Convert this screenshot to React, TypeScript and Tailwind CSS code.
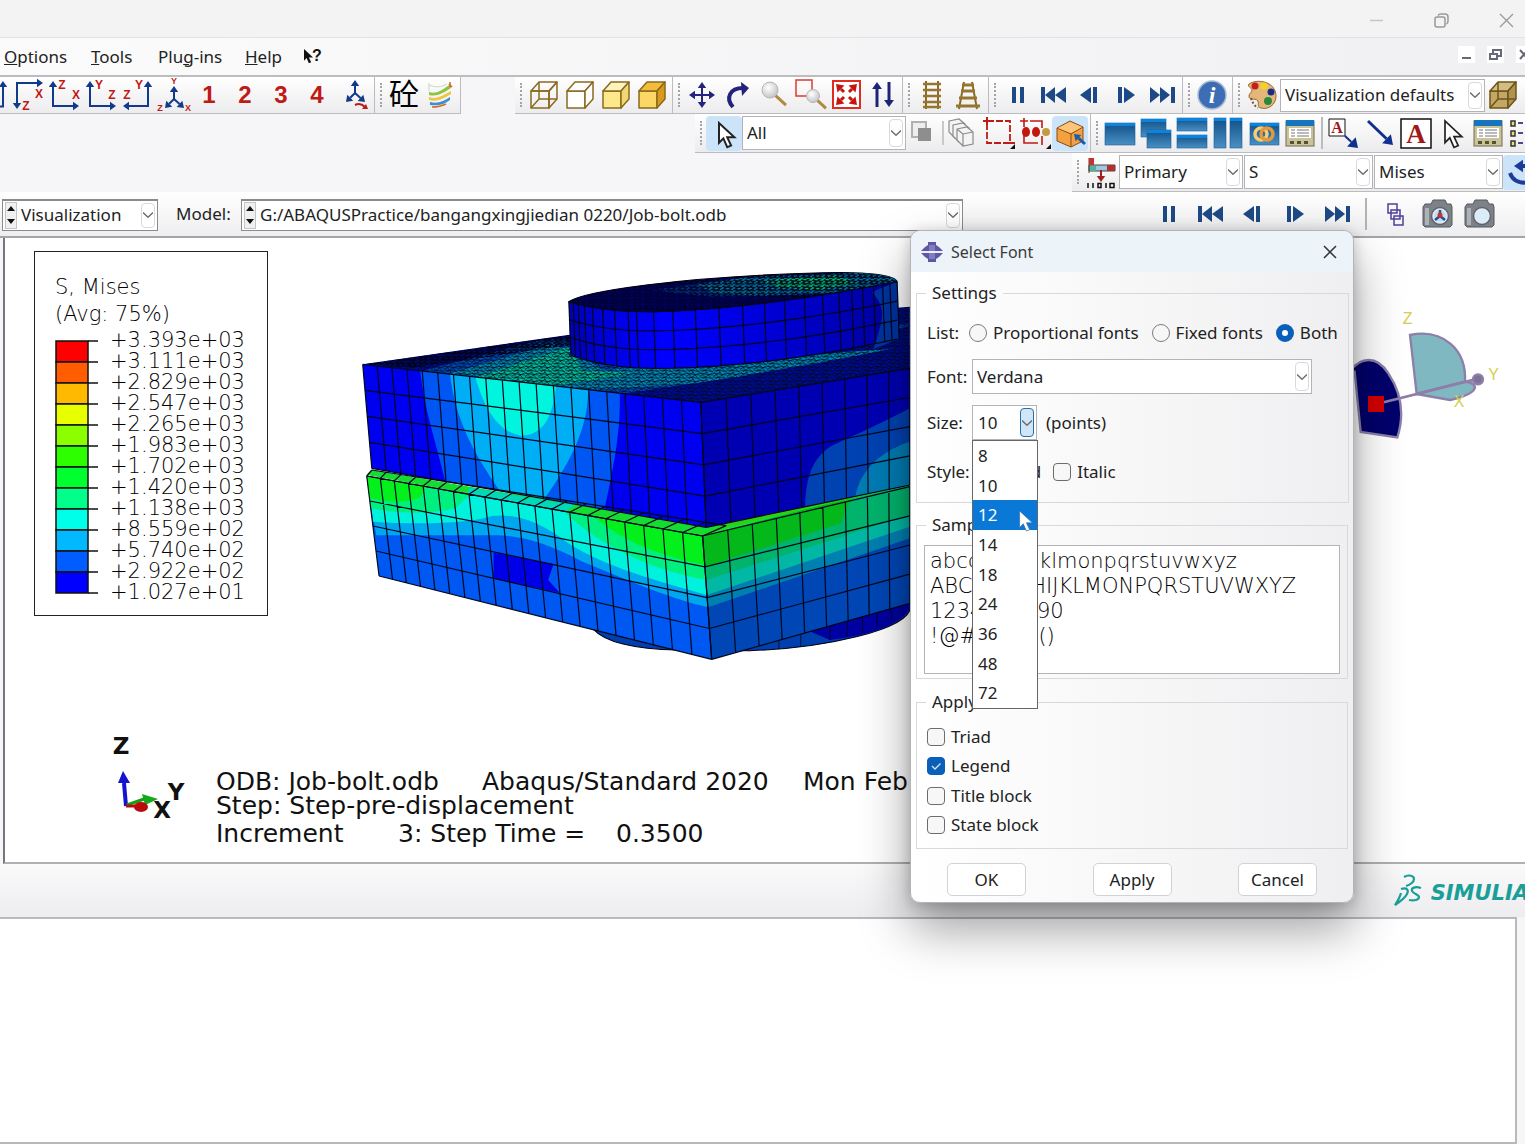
import type { ReactNode } from 'react'

const NAVY = '#123a8a'
const RED = '#c01a14'

type Pt = [number, number]

function Arrow({ a, b, color = NAVY, w = 2, head = 5 }: { a: Pt; b: Pt; color?: string; w?: number; head?: number }) {
  const len = Math.hypot(b[0] - a[0], b[1] - a[1])
  const ux = (b[0] - a[0]) / len
  const uy = (b[1] - a[1]) / len
  const bx = b[0] - ux * head
  const by = b[1] - uy * head
  const s = head * 0.7
  return (
    <g fill={color} stroke="none">
      <line x1={a[0]} y1={a[1]} x2={bx} y2={by} stroke={color} strokeWidth={w} />
      <polygon points={`${b[0]},${b[1]} ${bx - uy * s},${by + ux * s} ${bx + uy * s},${by - ux * s}`} />
    </g>
  )
}

function Letter({ x, y, c, size = 12 }: { x: number; y: number; c: string; size?: number }) {
  return (
    <text x={x} y={y + size * 0.36} fontSize={size} fontWeight="700" fill={RED} textAnchor="middle" fontFamily="Liberation Sans, sans-serif">
      {c}
    </text>
  )
}

function Tool({ label, children, active }: { label: string; children: ReactNode; active?: boolean }) {
  return (
    <button
      type="button"
      aria-label={label}
      className={`flex h-[35px] w-9 shrink-0 items-center justify-center ${active ? 'rounded-sm bg-[#cce4f9]' : ''}`}
    >
      <svg width="32" height="32" viewBox="0 0 32 32" fill="none" className="overflow-visible">
        {children}
      </svg>
    </button>
  )
}

function Grip() {
  return (
    <span className="flex w-[11px] shrink-0 justify-center">
      <span className="h-6 border-l-2 border-dotted border-[#a3a3a8]" />
    </span>
  )
}

function Group({ children, grip = true }: { children: ReactNode; grip?: boolean }) {
  return (
    <div className="flex h-full shrink-0 items-center border-r border-b border-[#bcbcc0] bg-linear-to-b from-white to-[#ececee] pr-0.5">
      {grip && <Grip />}
      {children}
    </div>
  )
}

function Chevron({ className = 'border-[#d9d9dc]' }: { className?: string }) {
  return (
    <span className={`pointer-events-none absolute top-[2px] right-[2px] bottom-[2px] flex w-[14px] items-center justify-center rounded-sm border ${className}`}>
      <svg width="10" height="6" viewBox="0 0 10 6" fill="none" stroke="#6b6b6b" strokeWidth="1.3">
        <path d="M0 .5 5 5.3 10 .5" />
      </svg>
    </span>
  )
}

function Combo({ label, value, className, id }: { label: string; value: string; className: string; id?: string }) {
  return (
    <span className={`relative block shrink-0 border border-[#b4b4b8] bg-white ${className}`}>
      <select id={id} aria-label={label} defaultValue={value} className="block h-full w-full appearance-none bg-transparent pr-4 pl-1 text-[#222] outline-none">
        <option>{value}</option>
      </select>
      <Chevron />
    </span>
  )
}

function Spinner() {
  return (
    <span className="flex h-[27px] w-3 shrink-0 flex-col items-center justify-center gap-2 border border-[#c4c4c4] bg-[#f0f0f0]">
      <svg width="8" height="18" viewBox="0 0 8 18" fill="#111">
        <path d="M4 0 8 5H0zM4 18 8 13H0z" />
      </svg>
    </span>
  )
}

const PLAY = '#1d4a86'

function PlaybackTools() {
  return (
    <>
      <Tool label="Pause">
        <path d="M10 8h4v16h-4zM18 8h4v16h-4z" fill={PLAY} />
      </Tool>
      <Tool label="First">
        <path d="M3 8h4v16H3zM17 8v16L7 16zM28 8v16L17 16z" fill={PLAY} />
      </Tool>
      <Tool label="Previous">
        <path d="M6 16 17 8v16zM19 8h4v16h-4z" fill={PLAY} />
      </Tool>
      <Tool label="Next">
        <path d="M8 8h4v16H8zM14 8v16l11-8z" fill={PLAY} />
      </Tool>
      <Tool label="Last">
        <path d="M4 8v16l10-8zM14 8v16l10-8zM25 8h4v16h-4z" fill={PLAY} />
      </Tool>
    </>
  )
}

function Cube({ front, top, side, stroke = '#8a6a1e', wire }: { front: string; top: string; side: string; stroke?: string; wire?: boolean }) {
  return (
    <g stroke={stroke} strokeWidth="1.500" strokeLinejoin="round">
      <path d="M3 12h18v17H3z" fill={front} />
      <path d="M3 12 11 3h18l-8 9z" fill={top} />
      <path d="M21 12 29 3v17l-8 9z" fill={side} />
      {wire && <path d="M11 3v17h18M11 20l-8 9" />}
    </g>
  )
}

function Pane({ x, y, w, h }: { x: number; y: number; w: number; h: number }) {
  return (
    <g>
      <rect x={x} y={y} width={w} height={h} fill="url(#pane)" stroke="#1d5c98" strokeWidth=".6" />
      <rect x={x} y={y} width={w} height="3" fill="#0b84e0" />
    </g>
  )
}

const CURSOR = 'M0 0v18l4-4 3.500 8 3.500-1.500-3.500-7.500H14z'

function Table() {
  return (
    <g>
      <rect x="2" y="4" width="28" height="25" fill="#c9c29a" stroke="#6f6a4e" />
      <rect x="2" y="3" width="28" height="6" fill="#1474bd" />
      <rect x="5" y="11" width="22" height="10" fill="#fff" />
      <path d="M7 13h4M7 16h4M7 19h4M13 13h12M13 16h12M13 19h12" stroke="#777" />
      <path d="M6 24h4v3H6zM13 24h4v3h-4zM20 24h4v3h-4z" fill="#55532f" />
    </g>
  )
}

function Lens({ x, y, r }: { x: number; y: number; r: number }) {
  return (
    <g>
      <path d={`M${x + r * 0.6} ${y + r * 0.6} ${x + r * 2} ${y + r * 1.9}`} stroke="#b08a3e" strokeWidth="3" />
      <circle cx={x} cy={y} r={r} fill="url(#lens)" stroke="#b5b5b5" />
    </g>
  )
}

function Camera({ color }: { color?: boolean }) {
  return (
    <g>
      <path d="M2 9 4 6h6l2-4h12l2 4h4l1 3v18l-2 2H4l-2-2z" fill="#7d8288" stroke="#55595e" />
      <path d="M4 10h4v17H4z" fill="#adb2b7" />
      <circle cx="19" cy="18" r="8.500" fill="#e3ebf2" stroke="#5e646b" strokeWidth="1.500" />
      <circle cx="19" cy="18" r="6" fill={color ? '#c6dcf0' : '#d8ecfb'} />
      {color && <path d="M19 18v-6M19 18l-5 4M19 18l5 4" stroke="#234f9c" strokeWidth="2.500" />}
      {color && <circle cx="19" cy="17" r="2.500" fill="#cc3424" />}
    </g>
  )
}

function ViewTools() {
  return (
    <Group grip={false}>
      <span className="flex w-[11px] shrink-0 items-center overflow-hidden">
        <svg width="11" height="32" viewBox="0 0 11 32">
          <Arrow a={[3, 28]} b={[3, 2]} head={6} />
          <path d="M0 27.500h4" stroke={NAVY} strokeWidth="2" />
        </svg>
      </span>
      <Tool label="Bottom view">
        <Arrow a={[3, 4]} b={[30, 4]} head={6} />
        <Arrow a={[4, 4]} b={[4, 30]} head={6} />
        <Letter x={26} y={15} c="X" />
        <Letter x={13} y={27} c="Z" />
      </Tool>
      <Tool label="Top view">
        <Arrow a={[4, 28]} b={[4, 2]} head={6} />
        <Arrow a={[3, 27]} b={[30, 27]} head={6} />
        <Letter x={13} y={6} c="Z" />
        <Letter x={27} y={16} c="X" />
      </Tool>
      <Tool label="Left view">
        <Arrow a={[5, 28]} b={[5, 2]} head={6} />
        <Arrow a={[4, 27]} b={[31, 27]} head={6} />
        <Letter x={14} y={6} c="Y" />
        <Letter x={27} y={16} c="Z" />
      </Tool>
      <Tool label="Right view">
        <Arrow a={[27, 28]} b={[27, 2]} head={6} />
        <Arrow a={[28, 27]} b={[2, 27]} head={6} />
        <Letter x={18} y={6} c="Y" />
        <Letter x={6} y={16} c="Z" />
      </Tool>
      <Tool label="Iso view">
        <Arrow a={[17, 20]} b={[17, 7]} head={6} />
        <Arrow a={[17, 20]} b={[8, 29]} head={6} />
        <Arrow a={[17, 20]} b={[27, 29]} head={6} />
        <Letter x={17} y={2} c="Y" size={9} />
        <Letter x={3} y={29} c="Z" size={9} />
        <Letter x={31} y={29} c="X" size={9} />
      </Tool>
      {['1', '2', '3', '4'].map((n) => (
        <button key={n} type="button" className="h-[35px] w-9 shrink-0 font-['Liberation_Sans',sans-serif] text-2xl font-bold text-[#c01a14]">
          {n}
        </button>
      ))}
      <Tool label="Specify view">
        <Arrow a={[18, 14]} b={[18, 1]} head={6} />
        <Arrow a={[18, 14]} b={[9, 23]} head={6} />
        <Arrow a={[18, 14]} b={[28, 23]} head={6} />
        <path d="M18 26c4-2 7-1 10 2" stroke={RED} strokeWidth="2" />
        <path d="m31 30-6 0 4-5z" fill={RED} />
      </Tool>
      <span className="ml-[3px] h-full border-l border-[#bcbcc0]" />
      <Grip />
      <button type="button" className="h-[35px] w-9 shrink-0 font-['Liberation_Sans','Noto_Sans_CJK_SC',sans-serif] text-[30px] leading-[30px] text-black">
        砼
      </button>
      <Tool label="Contour tools">
        <path d="M5 13c8 3 14-3 22-8v4c-8 5-14 9-22 7z" fill="#8cc63f" />
        <path d="M5 18c8 3 14-2 22-6v3c-8 5-14 8-22 6z" fill="#f0c541" />
        <path d="M6 23c8 2 14-1 20-5v3c-7 5-12 6-20 5z" fill="#3b8fd4" />
        <path d="M8 28c6 0 10-1 14-3M25 5l3 3M26 3v5" stroke="#d9682a" strokeWidth="1.500" />
        <path d="M5 6c8 3 12 2 18-1M5 4v8" stroke="#ccd6c0" />
      </Tool>
    </Group>
  )
}

function ToolbarTop() {
  return (
    <div className="flex h-[39px] overflow-hidden border-t-2 border-[#bdbdc1]">
      <ViewTools />
      <div className="ml-[54px] flex grow">
        <Group>
          <Tool label="Wireframe">
            <Cube front="none" top="none" side="none" wire />
          </Tool>
          <Tool label="Hidden line">
            <Cube front="#fff" top="#fff" side="#fff" />
          </Tool>
          <Tool label="Filled">
            <Cube front="#fbe98c" top="#fdf3bd" side="#efd873" />
          </Tool>
          <Tool label="Shaded">
            <Cube front="#fbd765" top="#f3bd3a" side="#d99a1c" />
          </Tool>
        </Group>
        <Group>
          <Tool label="Pan">
            {([[16, 3], [16, 29], [3, 16], [29, 16]] as Pt[]).map((p) => (
              <Arrow key={p.join()} a={[16, 16]} b={p} color="#23237d" head={6} />
            ))}
          </Tool>
          <Tool label="Rotate">
            <path d="M11 28C3 19 8 9 21 9" stroke="#23237d" strokeWidth="4" />
            <path d="m19 3 8 6-7 8z" fill="#23237d" />
          </Tool>
          <Tool label="Magnify">
            <Lens x={12} y={11} r={8} />
          </Tool>
          <Tool label="Box zoom">
            <path d="M2 1h16v16H2z" stroke="#dc3a34" strokeWidth="1.500" />
            <Lens x={19} y={17} r={6.5} />
          </Tool>
          <Tool label="Fit view">
            <path d="M3 2h27v27H3z" fill="#fff" stroke="#e02b22" strokeWidth="2" />
            {([[6, 5], [27, 5], [6, 26], [27, 26]] as Pt[]).map((p) => (
              <Arrow key={p.join()} a={[p[0] < 16 ? 14 : 19, p[1] < 16 ? 13 : 18]} b={p} color="#c4160f" w={3} head={7} />
            ))}
          </Tool>
          <Tool label="Cycle views">
            <Arrow a={[11, 28]} b={[11, 3]} color="#1c2478" w={3} head={7} />
            <Arrow a={[23, 3]} b={[23, 28]} color="#1c2478" w={3} head={7} />
          </Tool>
        </Group>
        <Group>
          <Tool label="Parallel">
            <path d="M10 2v28M22 2v28" stroke="#8a6a28" strokeWidth="2" />
            <path d="M7 5h18M7 11h18M7 17h18M7 23h18M7 28h18" stroke="#96762e" strokeWidth="2.500" />
          </Tool>
          <Tool label="Perspective">
            <path d="M12 3 7 30M20 3l5 27" stroke="#8a6a28" strokeWidth="2" />
            <path d="M10 6h12M9 12h14M7 19h18M4 27h24" stroke="#96762e" strokeWidth="3" />
          </Tool>
        </Group>
        <Group>
          <PlaybackTools />
        </Group>
        <Group>
          <Tool label="Query">
            <circle cx="16" cy="16" r="14" fill="#3c6db5" stroke="#a9bad4" strokeWidth="1.500" />
            <text x="16" y="24" fontSize="24" fontStyle="italic" fontWeight="700" textAnchor="middle" fill="#fff" fontFamily="Liberation Serif, serif">
              i
            </text>
          </Tool>
        </Group>
        <div className="flex grow items-center border-b border-[#bcbcc0] bg-linear-to-b from-white to-[#ececee]">
          <Grip />
          <Tool label="Color code">
            <path d="M3 5C12-1 30 3 30 17c0 9-8 14-15 12-5-1-1-6-4-8-2-2-8 1-8-4 0-3 3-3 3-6 0-2-5-3-3-6z" fill="#e2b777" stroke="#94683a" />
            <circle cx="9" cy="7" r="3.500" fill="#c61d1d" />
            <circle cx="18" cy="7" r="3.500" fill="#f1d320" />
            <circle cx="25" cy="13" r="3.500" fill="#1c2a86" />
            <circle cx="22" cy="22" r="4" fill="#258a3c" />
            <path d="M5 19c2 6 4 8 7 10" stroke="#7a4e2a" strokeWidth="2" strokeDasharray="2 2" />
          </Tool>
          <Combo label="Color mapping" value="Visualization defaults" className="h-[33px] w-[205px]" />
          <Tool label="Translucency">
            <Cube front="#c3a765" top="#d3bd85" side="#b09350" stroke="#6f5418" wire />
          </Tool>
        </div>
      </div>
    </div>
  )
}

function ToolbarSelection() {
  return (
    <div className="ml-[695px] flex h-[39px] overflow-hidden">
      <Group>
        <Tool label="Select" active>
          <path d={CURSOR} transform="translate(11 6) scale(1.1)" fill="#fff" stroke="#222" strokeWidth="1.800" />
        </Tool>
        <Combo label="Selection filter" value="All" className="h-[34px] w-[164px]" />
        <Tool label="Replace selected">
          <path d="M4 5h14v15H4z" stroke="#b0b0b0" strokeWidth="2" fill="#eee" />
          <path d="M10 11h13v13H10z" fill="#8e8e8e" />
        </Tool>
        <span className="h-6 border-l-2 border-[#c9c9cb]" />
        <Tool label="Display group">
          <g stroke="#8b8b8b" strokeWidth="1.200" fill="#f4f4f4">
            <path d="m3 4 10-2 6 5v12l-10 2-6-6z" />
            <path d="m7 8 10-2 6 5v12l-10 2-6-6z" />
            <path d="m11 12 10-2 6 5v12l-10 2-6-6zM11 12l6 5v12M17 17l10-2" />
          </g>
        </Tool>
        <Tool label="Drag rectangle">
          <path d="M5 4h23v22H5z" stroke="#c01a14" strokeWidth="1.800" strokeDasharray="7 2" />
          <path d="M1 4h8M5 0v8M24 26h9" stroke="#c01a14" strokeWidth="2" />
          <path d="M33 32v-5l-5 5z" fill="#111" />
        </Tool>
        <Tool label="Selection options">
          <path d="M2 4h8M6 1v9M6 12v14h14M12 4h12v7M24 19v9" stroke="#c01a14" strokeWidth="1.600" />
          <ellipse cx="8" cy="15" rx="4" ry="5" fill="#c2160f" />
          <ellipse cx="18" cy="15" rx="4" ry="5" fill="#c2160f" />
          <circle cx="28" cy="15" r="4" fill="#c59a45" />
          <path d="M33 32v-5l-5 5z" fill="#111" />
        </Tool>
        <Tool label="Select from exterior" active>
          <path d="m3 11 13-7 13 6v14l-12 6-14-6z" fill="#f2a040" stroke="#8a4b12" />
          <path d="m3 11 14 6 12-7M17 17v13" stroke="#8a4b12" />
          <path d="m4 11 12-6 12 5-11 6z" fill="#fbc67c" />
          <Arrow a={[31, 27]} b={[20, 17]} color="#1d5ca8" head={6} w={3} />
        </Tool>
      </Group>
      <div className="flex grow items-center border-b border-[#bcbcc0] bg-linear-to-b from-white to-[#ececee]">
        <Grip />
        <Tool label="New viewport">
          <Pane x={1} y={6} w={30} h={22} />
        </Tool>
        <Tool label="Cascade">
          <Pane x={1} y={2} w={25} h={18} />
          <Pane x={7} y={13} w={24} h={18} />
        </Tool>
        <Tool label="Tile horizontally">
          <Pane x={1} y={1} w={30} h={13} />
          <Pane x={1} y={18} w={30} h={13} />
        </Tool>
        <Tool label="Tile vertically">
          <Pane x={2} y={1} w={12} h={30} />
          <Pane x={18} y={1} w={12} h={30} />
        </Tool>
        <Tool label="Link viewports">
          <Pane x={2} y={6} w={29} h={22} />
          <g stroke="#f4cd74" strokeWidth="3.500">
            <circle cx="13" cy="17" r="6" />
            <circle cx="19" cy="17" r="6" stroke="#e39a3c" />
          </g>
        </Tool>
        <Tool label="Viewport annotations">
          <Table />
        </Tool>
        <span className="mx-[3px] h-8 border-l-2 border-[#bcbcc0]" />
        <Tool label="Text with arrow">
          <path d="M1 2h16v17H1z" fill="#fff" stroke="#111" />
          <text x="9" y="16" fontSize="16" fontWeight="700" textAnchor="middle" fill="#a01818" fontFamily="Liberation Serif, serif">
            A
          </text>
          <Arrow a={[17, 19]} b={[30, 31]} color="#10308e" head={9} />
        </Tool>
        <Tool label="Arrow annotation">
          <Arrow a={[4, 4]} b={[29, 28]} color="#10308e" w={3} head={9} />
        </Tool>
        <Tool label="Text annotation">
          <path d="M1 2h30v29H1z" fill="#fff" stroke="#111" strokeWidth="1.500" />
          <text x="16" y="26" fontSize="27" fontWeight="700" textAnchor="middle" fill="#a01818" fontFamily="Liberation Serif, serif">
            A
          </text>
        </Tool>
        <Tool label="Edit annotation">
          <path d={CURSOR} transform="translate(9 4) scale(1.2)" fill="#fff" stroke="#222" strokeWidth="1.400" />
        </Tool>
        <Tool label="Annotation manager">
          <Table />
        </Tool>
        <Tool label="Options list">
          <path d="M3 4h4v5H3zM3 14h4v5H3zM3 24h4v5H3z" stroke="#333" strokeWidth="1.500" fill="#e8df70" />
          <path d="M10 6h20M10 16h20M10 26h20" stroke="#4b4b8c" strokeWidth="2" strokeDasharray="5 2" />
        </Tool>
      </div>
    </div>
  )
}

function ToolbarField() {
  return (
    <div className="ml-[1072px] flex h-[39px] items-center overflow-hidden border-b border-[#bcbcc0] bg-linear-to-b from-white to-[#ececee]">
      <Grip />
      <Tool label="Field output">
        <path d="M4 2v15M4 9h26v6H4z" fill="#9fc8e0" stroke="#444" />
        <path d="M4 2h5v7H4z" fill="#c8322a" />
        <path d="M5 10h6v5H5z" fill="#4fb29d" />
        <path d="M22 9h8v6h-8z" fill="#b03030" />
        <Arrow a={[16, 14]} b={[16, 26]} color="#a31f1f" head={6} />
        <path d="M3 27v5M8 27v5M13 27.500v4h3v-4zM21 27v5M25 27.500h4v4h-4z" stroke="#111" strokeWidth="1.500" />
      </Tool>
      <Combo label="Variable type" value="Primary" className="h-[34px] w-[124px]" />
      <Combo label="Output variable" value="S" className="ml-[1px] h-[34px] w-[129px]" />
      <Combo label="Invariant" value="Mises" className="ml-[1px] h-[34px] w-[129px]" />
      <Tool label="Sync" active>
        <path d="M5 17c3 9 12 11 22 9" stroke="#1e3c96" strokeWidth="4" />
        <Arrow a={[26, 10]} b={[9, 10]} color="#1e3c96" w={4} head={9} />
      </Tool>
    </div>
  )
}

function ContextBar() {
  return (
    <div className="flex h-[46px] items-center border-b-2 border-[#a5a5a9] bg-linear-to-b from-white to-[#eeeef0]">
      <div className="relative mt-[1px] ml-[2px] flex h-8 w-[156px] items-center border border-t-2 border-[#8b8b8f] bg-white pl-[2px]">
        <Spinner />
        <select aria-label="Module" className="h-full grow appearance-none bg-transparent pl-1 outline-none">
          <option>Visualization</option>
        </select>
        <Chevron />
      </div>
      <label htmlFor="model" className="ml-[18px] w-[65px]">
        Model:
      </label>
      <div className="relative mt-[1px] flex h-8 w-[722px] items-center border border-t-2 border-[#8b8b8f] bg-white pl-[2px]">
        <Spinner />
        <select id="model" className="h-full grow appearance-none bg-transparent pl-1 outline-none">
          <option>G:/ABAQUSPractice/bangangxingjiedian 0220/Job-bolt.odb</option>
        </select>
        <Chevron />
      </div>
      <div className="ml-[188px] flex gap-[6px]">
        <PlaybackTools />
      </div>
      <span className="ml-[10px] h-8 border-l-2 border-[#b3b3b7]" />
      <div className="ml-[10px] flex items-center gap-[6px]">
        <Tool label="Viewports">
          <g stroke="#4d3f9a" strokeWidth="1.500">
            <path d="M9 6h9v9H9zM12 12h9v9h-9zM15 18h9v9h-9z" />
          </g>
        </Tool>
        <Tool label="Snapshot with axes">
          <Camera color />
        </Tool>
        <Tool label="Snapshot">
          <Camera />
        </Tool>
      </div>
    </div>
  )
}

const LEVELS = [
  ['+3.393e+03', '#ff0000'],
  ['+3.111e+03', '#ff5d00'],
  ['+2.829e+03', '#ffb900'],
  ['+2.547e+03', '#e8ff00'],
  ['+2.265e+03', '#8bff00'],
  ['+1.983e+03', '#2eff00'],
  ['+1.702e+03', '#00ff2e'],
  ['+1.420e+03', '#00ff8b'],
  ['+1.138e+03', '#00ffe8'],
  ['+8.559e+02', '#00b9ff'],
  ['+5.740e+02', '#005dff'],
  ['+2.922e+02', '#0000ff'],
  ['+1.027e+01', ''],
]

function Legend() {
  return (
    <div className="absolute top-[13px] left-[29px] w-[234px] border border-[#222] bg-white pt-[22px] pb-[9px] pl-5 font-['DejaVu_Sans',sans-serif] text-[21px] font-extralight text-black">
      <p className="leading-[27px]">S, Mises</p>
      <p className="leading-[27px]">(Avg: 75%)</p>
      <div className="mt-[2px] flex">
        <svg width="44" height="276" viewBox="0 0 44 276" className="shrink-0">
          {LEVELS.map(([label, color], i) => (
            <g key={label}>
              {color && <rect x="1" y={11 + i * 21} width="32" height="21" fill={color} stroke="#111" strokeWidth="1.500" />}
              <path d={`M33 ${11 + i * 21}h10`} stroke="#111" strokeWidth="1.500" />
            </g>
          ))}
        </svg>
        <ul className="ml-[11px]">
          {LEVELS.map(([label]) => (
            <li key={label} className="leading-[21px]">
              {label}
            </li>
          ))}
        </ul>
      </div>
    </div>
  )
}

// straight grid over a quad; k > 0 makes the columns grow from left to right
function grid(tl: Pt, tr: Pt, br: Pt, bl: Pt, cols: number, rows: number, k = 0) {
  const mix = (p: Pt, q: Pt, t: number) => `${(p[0] + (q[0] - p[0]) * t).toFixed(1)} ${(p[1] + (q[1] - p[1]) * t).toFixed(1)}`
  let d = ''
  for (let i = 0; i <= cols; i++) {
    const u = i / cols
    const t = u * (1 - k) + u * u * k
    d += `M${mix(tl, tr, t)}L${mix(bl, br, t)}`
  }
  for (let j = 0; j <= rows; j++) {
    d += `M${mix(tl, bl, j / rows)}L${mix(tr, br, j / rows)}`
  }
  return d
}

const RIM_X = [602, 614, 628, 645, 667, 695, 728, 765, 788, 835, 888, 950, 1015, 1080, 1140, 1195, 1250, 1300, 1345, 1380, 1410, 1440, 1465, 1485, 1505]
const rimTop = (x: number) => (x < 830 ? 155 - 30 * ((830 - x) / 228) ** 2.4 : 155 - 90 * ((x - 830) / 675) ** 1.6)
const rimBottom = (x: number) => (x < 850 ? 325 - 42 * ((850 - x) / 248) ** 2.4 : 325 - 88 * ((x - 850) / 655) ** 1.8)
const rimLine = (f: number) => RIM_X.map((x, i) => `${i ? 'L' : 'M'}${x} ${(rimTop(x) + (rimBottom(x) - rimTop(x)) * f).toFixed(1)}`).join('')

const SLAB_TOP = 'M35 313 600 225 1540 140V325L965 427z'
const CAP_TOP = `M602 125C640 95 900 50 1300 38C1440 34 1500 48 1505 65${[...RIM_X].reverse().map((x) => `L${x} ${rimTop(x).toFixed(1)}`).join('')}z`

function Model() {
  return (
    <svg className="absolute top-[22px] left-[345px]" width="570" height="410" viewBox="0 0 1568 1230" preserveAspectRatio="none" fill="none">
      <defs>
        <pattern id="dense" width="37" height="21" patternUnits="userSpaceOnUse">
          <path d="M0 4 37 9M0 15l37 4M2 0l17 21M18 0l15 21M0 13 20 0M6 21 37 2" stroke="#000814" strokeWidth="2" />
        </pattern>
        <pattern id="denser" width="31" height="19" patternUnits="userSpaceOnUse">
          <path d="M0 4l31 3M0 13l31 3M3 0l12 19M17 0l11 19M0 14 24 0M6 19l25-13" stroke="#000014" strokeWidth="3" />
        </pattern>
        <clipPath id="slabTop">
          <path d={SLAB_TOP} />
        </clipPath>
        <clipPath id="capTop">
          <path d={CAP_TOP} />
        </clipPath>
        <linearGradient id="capSide" x1="602" x2="1505" y1="0" y2="0" gradientUnits="userSpaceOnUse">
          <stop offset="0" stopColor="#0000b4" />
          <stop offset=".15" stopColor="#0000e6" />
          <stop offset=".3" stopColor="#0000ff" />
          <stop offset=".6" stopColor="#0000d8" />
          <stop offset="1" stopColor="#00009c" />
        </linearGradient>
      </defs>

      {/* nut below the plates */}
      <path d="M670 1108C700 1145 780 1168 900 1170L1100 1172C1300 1165 1540 1110 1542 1040L1000 1000z" fill="#003fae" stroke="#001" strokeWidth="3" />
      <path d="M1262 1112 1542 1030C1542 1080 1450 1125 1320 1140z" fill="#0000a0" />
      <path d="M1320 1098v42M1368 1085v44M1410 1072v46M1450 1060v42M1490 1050v32M1180 1138v30M1240 1120v38" stroke="#000" strokeWidth="2" />

      {/* lower plate */}
      <path d="M46 645 60 630 980 800 1540 672V760L970 830z" fill="#14dc30" />
      <path d="M330 683 620 735 590 757 320 703z" fill="#00d8b8" />
      <path d="M46 648 970 828 995 1198 80 948z" fill="#0058f2" />
      <path d="M46 648 970 828 985 1042C860 1010 740 948 640 905C540 850 480 828 400 826L72 826z" fill="#00a6ee" />
      <path d="M46 648 970 828 982 1005C850 965 700 920 600 850C520 780 450 760 390 768C330 790 200 795 64 785z" fill="#00f2dc" />
      <path d="M46 648 330 703 290 745C220 765 120 760 58 745zM590 757 970 828 980 960C830 930 690 860 590 757z" fill="#00f080" />
      <path d="M46 648 210 680 190 715C150 732 100 725 54 715zM670 770 970 828 976 915C860 890 760 850 670 770z" fill="#04f01c" />
      <path d="M395 878 560 912 545 960 577 998 395 956z" fill="#0000e8" />
      <path d="M970 828 1540 672V1030L995 1198z" fill="#0046b4" />
      <path d="M970 828 1540 672V835L985 1042z" fill="#0080b0" />
      <path d="M970 828 1540 672V800L982 1005z" fill="#00b8a4" />
      <path d="M970 828 1540 672V765L980 960z" fill="#00b46c" />
      <path d="M970 828 1380 712 1350 790 976 920z" fill="#04b81c" />
      <path d="M970 828 1035 797 1540 672" stroke="#30d010" strokeWidth="8" />

      {/* upper plate */}
      <path d={SLAB_TOP} fill="#000a9c" />
      <g clipPath="url(#slabTop)">
        <path d="M190 335 520 240 1560 190 1100 345 750 402z" fill="#0048b8" />
        <path d="M270 342 560 250 700 330 1440 270 1540 262 960 370 650 390z" fill="#0086b4" />
        <path d="M345 352 600 260 640 330 780 340 565 378z" fill="#00b89c" />
        <path d="M750 402 1200 330 1540 255v80L965 430z" fill="#000a9c" />
        <path d={SLAB_TOP} fill="url(#dense)" />
        <path d="M35 313 600 225 640 250 180 322z" fill="url(#denser)" />
      </g>
      <path d="M35 313 965 427 980 802 60 625z" fill="#0000f0" />
      <path d="M193 332 742 400C745 500 730 600 700 748L262 664C235 540 205 450 193 332z" fill="#0056f2" />
      <path d="M275 343 655 389C655 500 610 600 535 716L412 693C340 580 290 480 275 343z" fill="#00aef6" />
      <path d="M345 351 567 378C560 440 545 527 470 527C400 515 365 430 345 351z" fill="#00f4de" />
      <path d="M965 427 1540 325V675L980 802z" fill="#0000b2" />
      <path d="M1252 740C1255 650 1270 600 1320 560C1400 520 1480 480 1540 445V675z" fill="#0042b2" />
      <path d="M1390 708C1400 650 1440 580 1540 545V675z" fill="#007cb4" />

      <g stroke="#00061c" strokeWidth="1.200">
        <path vectorEffect="non-scaling-stroke" d={grid([35, 313], [965, 427], [980, 802], [60, 625], 20, 4, 0.15)} />
        <path vectorEffect="non-scaling-stroke" d={grid([965, 427], [1540, 325], [1540, 675], [980, 802], 9, 4, -0.1)} />
        <path vectorEffect="non-scaling-stroke" d={grid([46, 648], [970, 828], [995, 1198], [80, 948], 20, 4, 0.2)} />
        <path vectorEffect="non-scaling-stroke" d={grid([970, 828], [1540, 680], [1540, 1030], [995, 1198], 9, 4, -0.1)} />
        <path vectorEffect="non-scaling-stroke" d={grid([60, 630], [1035, 797], [970, 828], [46, 648], 20, 1, 0.2)} />
      </g>

      {/* bolt head */}
      <path d={`${rimLine(0)}L1510 238${[...RIM_X].reverse().map((x) => `L${x + 4} ${rimBottom(x).toFixed(1)}`).join('')}z`} fill="url(#capSide)" />
      <path d="M1436 96 1505 65 1510 236 1440 268C1450 230 1462 200 1464 160C1460 120 1445 110 1436 96z" fill="#0034a0" />
      <path d={CAP_TOP} fill="#000678" stroke="#000" strokeWidth="3" />
      <g clipPath="url(#capTop)">
        <path d="M830 90 1100 50 1505 35V80L1380 98 1000 112z" fill="#0078a8" />
        <path d="M1130 62 1340 45 1400 70 1290 90 1180 82z" fill="#00bc78" />
        <path d={CAP_TOP} fill="url(#denser)" />
        <path d="M600 150 640 90 950 70 1000 100 1250 115 800 160z" fill="#00004a" fillOpacity=".55" />
      </g>
      <g stroke="#00061c" strokeWidth="1.200">
        <path vectorEffect="non-scaling-stroke" d={RIM_X.map((x) => `M${x} ${rimTop(x).toFixed(1)}L${x + 6} ${rimBottom(x).toFixed(1)}`).join('')} />
        <path vectorEffect="non-scaling-stroke" d={rimLine(0) + rimLine(0.34) + rimLine(0.67) + rimLine(1)} />
      </g>
    </svg>
  )
}

function Compass() {
  return (
    <svg className="absolute top-[62px] right-0" width="175" height="150" viewBox="0 0 525 450" fill="none" stroke="#8d7fa8" strokeWidth="7">
      <path d="M0 215C30 170 80 165 115 220C155 280 165 340 142 412L32 396 14 215z" fill="#00006c" />
      <path d="M180 105C280 85 350 150 345 245L200 282z" fill="#80b8c2" />
      <path d="M200 282 345 245C390 250 390 280 300 300z" fill="#80b8c2" />
      <path d="M80 312 385 236" strokeWidth="8" />
      <circle cx="384" cy="238" r="15" fill="#7d7199" />
      <path d="M54 288h48v48H54z" fill="#d40000" stroke="none" />
      <g fill="#d8cc50" stroke="none" fontSize="48" textAnchor="middle" fontFamily="Liberation Sans, sans-serif">
        <text x="173" y="72">Z</text>
        <text x="431" y="241">Y</text>
        <text x="327" y="320">X</text>
      </g>
    </svg>
  )
}

function Triad() {
  return (
    <svg className="absolute top-[491px] left-[95px]" width="100" height="96" viewBox="0 0 100 96" fill="none">
      <path d="M26 77 24 54" stroke="#1414d0" strokeWidth="4" />
      <path d="M23 42 30 54H18z" fill="#1414d0" />
      <path d="M27 76 44 70" stroke="#14a014" strokeWidth="3" />
      <path d="M42 65 58 70 45 76z" fill="#14a81c" />
      <ellipse cx="41" cy="78" rx="7" ry="5" fill="#b80c0c" />
      <path d="M26 77h12" stroke="#b80c0c" strokeWidth="3" />
      <g fill="#111" fontSize="23" fontWeight="700" textAnchor="middle" fontFamily="DejaVu Sans, sans-serif">
        <text x="21" y="25">Z</text>
        <text x="76" y="71">Y</text>
        <text x="62" y="89">X</text>
      </g>
    </svg>
  )
}

function Viewport() {
  return (
    <main className="relative ml-[3px] h-[626px] overflow-hidden border-b-2 border-l-2 border-[#b0b0b4] border-l-[#77777b] bg-white">
      <Legend />
      <Model />
      <Compass />
      <Triad />
      <div className="absolute top-[532px] left-[211px] font-['DejaVu_Sans',sans-serif] text-[25px] leading-[24px] whitespace-nowrap text-[#111]">
        <p className="flex">
          <span className="w-[266px]">ODB: Job-bolt.odb</span>
          <span className="w-[321px]">Abaqus/Standard 2020</span>
          <span>Mon Feb</span>
        </p>
        <p>Step: Step-pre-displacement</p>
        <p className="mt-1 flex">
          <span className="w-[182px]">Increment</span>
          <span className="w-[218px]">3: Step Time =</span>
          <span>0.3500</span>
        </p>
      </div>
    </main>
  )
}

const SIZES = ['8', '10', '12', '14', '18', '24', '36', '48', '72']

function Radio({ label, checked }: { label: string; checked?: boolean }) {
  return (
    <label className="flex items-center gap-[6px] whitespace-nowrap">
      <input
        type="radio"
        name="list"
        defaultChecked={checked}
        className="h-[18px] w-[18px] appearance-none rounded-full border border-[#7c7c7c] bg-[#f7f7f7] checked:border-[6px] checked:border-[#0a5fb8] checked:bg-white"
      />
      {label}
    </label>
  )
}

function Check({ label, checked }: { label: string; checked?: boolean }) {
  return (
    <label className="flex items-center gap-[6px]">
      <span className="relative flex h-[18px] w-[18px]">
        <input
          type="checkbox"
          defaultChecked={checked}
          className="peer h-[18px] w-[18px] appearance-none rounded-[4px] border border-[#6c6c6c] bg-[#f7f7f7] checked:border-[#0a5fb8] checked:bg-[#0a5fb8]"
        />
        <svg className="pointer-events-none absolute inset-0 hidden peer-checked:block" width="18" height="18" viewBox="0 0 18 18" fill="none" stroke="#d6e8f8" strokeWidth="1.300">
          <path d="m5 9 3 3 5.500-5.500" />
        </svg>
      </span>
      {label}
    </label>
  )
}

function SelectFontDialog() {
  return (
    <div
      role="dialog"
      aria-labelledby="dialog-title"
      className="absolute top-[230px] left-[910px] w-[444px] rounded-[10px] border border-[#b2b4b8] bg-linear-to-r from-white to-[#efeff1] text-[#222] shadow-[0_26px_50px_rgba(0,0,0,0.38),0_2px_14px_rgba(0,0,0,0.2)]"
    >
      <div className="flex h-[41px] items-center rounded-t-[10px] bg-[#edf4f9] pr-[14px] pl-[10px]">
        <svg width="22" height="22" viewBox="0 0 22 22" fill="#5c58a6">
          <path d="M7 1h8v3l3 2 4 4H0l4-4 3-2zM0 12h22l-4 4-3 2v3H7v-3l-3-2z" />
          <path d="M8 4h6v14H8z" fill="#9a97cc" fillOpacity=".6" />
          <path d="M0 10h22v2H0z" fill="#eef" />
        </svg>
        <h2 id="dialog-title" className="ml-2 grow text-base text-[#3a3a3a]">
          Select Font
        </h2>
        <button type="button" aria-label="Close">
          <svg width="18" height="18" viewBox="0 0 18 18" stroke="#333" strokeWidth="1.500">
            <path d="m3 3 12 12M15 3 3 15" />
          </svg>
        </button>
      </div>

      <form className="px-[5px] pb-[6px]" onSubmit={(e) => e.preventDefault()}>
        <fieldset className="mt-[8px] h-[223px] border border-[#d9d9dc] px-[10px]">
          <legend className="-ml-[1px] px-[6px] leading-[26px]">Settings</legend>
          <div className="mt-[14px] flex h-[26px] items-center">
            <span className="w-[42px]">List:</span>
            <div className="flex gap-[13px]">
              <Radio label="Proportional fonts" />
              <Radio label="Fixed fonts" />
              <Radio label="Both" checked />
            </div>
          </div>
          <div className="mt-[13px] flex items-center">
            <label htmlFor="font" className="w-[45px]">
              Font:
            </label>
            <Combo id="font" label="Font" value="Verdana" className="h-[35px] w-[340px]" />
          </div>
          <div className="mt-[11px] flex items-center">
            <label htmlFor="size" className="w-[45px]">
              Size:
            </label>
            <div className="relative h-[35px] w-[65px] border border-[#b4b4b8] bg-white">
              <input id="size" defaultValue="10" className="h-full w-[45px] bg-transparent pl-[5px] outline-none" />
              <Chevron className="border-[#2c6da4] bg-[#cfe5f8]" />
              <ul role="listbox" aria-label="Size" className="absolute top-[34px] -left-[1px] z-10 flex h-[269px] w-[66px] flex-col border border-[#666] bg-white">
                {SIZES.map((s) => (
                  <li
                    key={s}
                    role="option"
                    aria-selected={s === '12'}
                    className={`flex flex-1 items-center pl-[5px] ${s === '12' ? 'bg-[#0a78d6] text-white' : ''}`}
                  >
                    {s}
                  </li>
                ))}
              </ul>
              <svg className="absolute top-[104px] left-[45px] z-20" width="16" height="22" viewBox="0 0 16 24">
                <path d={CURSOR} transform="translate(1 1)" fill="#fff" stroke="#3c6ea0" strokeWidth=".8" />
              </svg>
            </div>
            <span className="ml-[9px]">(points)</span>
          </div>
          <div className="mt-[19px] flex h-[26px] items-center">
            <span className="w-[54px]">Style:</span>
            <Check label="Bold" />
            <span className="w-[12px]" />
            <Check label="Italic" />
          </div>
        </fieldset>

        <fieldset className="mt-[9px] h-[167px] border border-[#d9d9dc] px-[7px]">
          <legend className="ml-[2px] px-[6px] leading-[26px]">Sample</legend>
          <div className="mt-[7px] h-[129px] border border-[#b4b4b8] bg-white px-[5px] pt-[3px] font-['DejaVu_Sans',sans-serif] text-[21px] leading-[25px] font-extralight whitespace-nowrap text-black">
            <p>abcdefghijklmonpqrstuvwxyz</p>
            <p>ABCDEFGHIJKLMONPQRSTUVWXYZ</p>
            <p>1234567890</p>
            <p>!@#$%^*()</p>
          </div>
        </fieldset>

        <fieldset className="mt-[10px] h-[160px] border border-[#d9d9dc] px-[10px]">
          <legend className="-ml-[1px] px-[6px] leading-[26px]">Apply To</legend>
          <div className="mt-[7px] grid h-[118px] grid-rows-4">
            <Check label="Triad" />
            <Check label="Legend" checked />
            <Check label="Title block" />
            <Check label="State block" />
          </div>
        </fieldset>

        <div className="mt-[14px] flex justify-between px-[31px]">
          {['OK', 'Apply', 'Cancel'].map((name) => (
            <button key={name} type="button" className="h-[33px] w-[79px] rounded-[5px] border border-[#d2d2d6] bg-white">
              {name}
            </button>
          ))}
        </div>
      </form>
    </div>
  )
}

export default function App() {
  return (
    <div className="relative flex min-h-screen w-full flex-col overflow-hidden bg-[#f6f5f8] font-['Noto_Sans',sans-serif] text-[17px] leading-6 text-[#222]">
      <svg width="0" height="0" className="absolute">
        <defs>
          <linearGradient id="pane" x1="0" y1="0" x2="0" y2="1">
            <stop offset="0" stopColor="#0f4f86" />
            <stop offset="1" stopColor="#4a90c4" />
          </linearGradient>
          <radialGradient id="lens" cx=".4" cy=".35" r=".7">
            <stop offset="0" stopColor="#fff" />
            <stop offset="1" stopColor="#bfc1c4" />
          </radialGradient>
        </defs>
      </svg>

      <header className="flex h-[38px] items-center justify-end gap-[50px] border-b border-[#e2e2e4] bg-[#f3f3f3] pt-1 pr-[11px]">
        <button type="button" aria-label="Minimize">
          <svg width="15" height="15" viewBox="0 0 15 15" stroke="#c4c4c4" strokeWidth="1.500">
            <path d="M1 7.500h13" />
          </svg>
        </button>
        <button type="button" aria-label="Restore">
          <svg width="15" height="15" viewBox="0 0 15 15" fill="none" stroke="#999" strokeWidth="1.500">
            <rect x="1" y="4" width="10" height="10" rx="2" />
            <path d="M4 2.500C5 1 5 1 7 1h4c2 0 3 1 3 3v4c0 2-.5 2.500-1.500 3" />
          </svg>
        </button>
        <button type="button" aria-label="Close window">
          <svg width="15" height="15" viewBox="0 0 15 15" stroke="#999" strokeWidth="1.300">
            <path d="m1 1 13 13M14 1 1 14" />
          </svg>
        </button>
      </header>

      <nav className="flex h-[37px] items-center bg-linear-to-r from-[#fbfbfc] to-[#f0f0f2] pl-1">
        <button type="button" className="w-[87px] text-left">
          <u>O</u>ptions
        </button>
        <button type="button" className="w-[67px] text-left">
          <u>T</u>ools
        </button>
        <button type="button" className="w-[87px] text-left">
          Plu<u>g</u>-ins
        </button>
        <button type="button" className="w-[58px] text-left">
          <u>H</u>elp
        </button>
        <button type="button" aria-label="Context help">
          <svg width="20" height="20" viewBox="0 0 20 20">
            <path d={CURSOR} transform="translate(1 2) scale(.65)" fill="#111" />
            <text x="14" y="14" fontSize="16" fontWeight="700" textAnchor="middle" fill="#111" fontFamily="Liberation Sans, sans-serif">
              ?
            </text>
          </svg>
        </button>
        <div className="-mr-2 ml-auto flex gap-3">
          {['M4 12h9', 'M3 8h7v5H3zM6 7V4h8v6h-3', 'm4 4 8 9m0-9-8 9'].map((d) => (
            <button key={d} type="button" aria-label="Document window" className="-mt-1 bg-white">
              <svg width="17" height="17" viewBox="0 0 17 17" fill="none" stroke="#666a78" strokeWidth="2">
                <path d={d} />
              </svg>
            </button>
          ))}
        </div>
      </nav>

      <ToolbarTop />
      <ToolbarSelection />
      <ToolbarField />
      <ContextBar />
      <Viewport />

      <div className="flex h-[53px] items-center justify-end overflow-hidden bg-linear-to-b from-[#fafafb] to-[#ededf0]">
        <div className="-mr-1 flex items-center gap-2 text-[#1a9f98]">
          <svg width="30" height="34" viewBox="0 0 30 34" fill="none" stroke="currentColor" strokeWidth="2.200">
            <path d="M11 3c5-3 10-1 10 2s-4 6-8 7" />
            <path d="M8 15c6-2 8 1 6 5s-6 7-12 11c2-3 5-8 6-12" />
            <path d="M28 14c-6-2-10 0-9 3s7 3 7 6-5 4-10 3" />
          </svg>
          <span className="pt-1 font-['DejaVu_Sans',sans-serif] text-[21px] font-bold italic">SIMULIA</span>
        </div>
      </div>
      <section aria-label="Message area" className="mr-2 h-[226px] grow border-2 border-l-0 border-[#b9b9bc] bg-white" />

      <SelectFontDialog />
    </div>
  )
}
